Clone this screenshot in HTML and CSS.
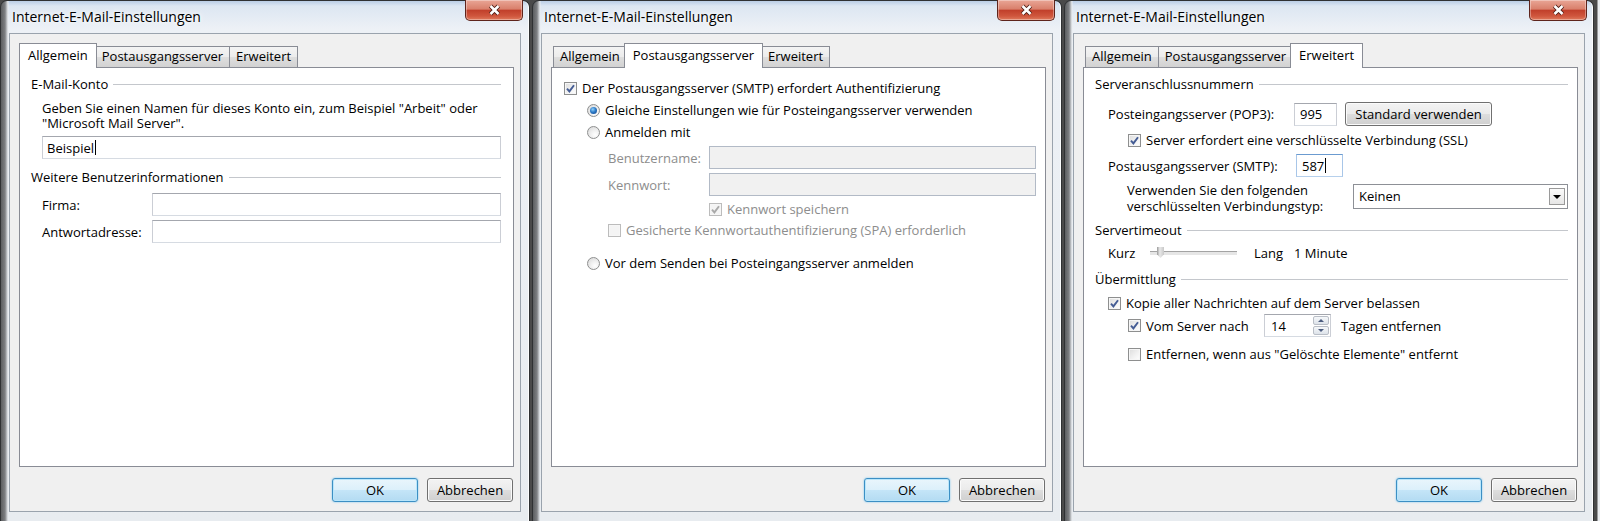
FILE: index.html
```html
<!DOCTYPE html>
<html lang="de">
<head>
    <meta charset="UTF-8" />
    <title>Internet-E-Mail-Einstellungen</title>
    <link rel="stylesheet" href="styles.css">
</head>
<body>
<div class="desktop">

<!-- ===== Dialog 1: Allgemein ===== -->
<section class="window">
    <div class="titlebar">
        <span class="title">Internet-E-Mail-Einstellungen</span>
        <span class="close">
            <svg viewBox="0 0 14 12"><path class="x-edge" d="M3 2L11 10M11 2L3 10"/><path class="x-core" d="M3 2L11 10M11 2L3 10"/></svg>
        </span>
    </div>
    <div class="client">
        <div class="tabs">
            <span class="tab active">Allgemein</span>
            <span class="tab">Postausgangsserver</span>
            <span class="tab">Erweitert</span>
        </div>
        <div class="panel general">
            <div class="group">E-Mail-Konto</div>
            <p class="hint">Geben Sie einen Namen für dieses Konto ein, zum Beispiel "Arbeit" oder<br>"Microsoft Mail Server".</p>
            <div class="textbox account">Beispiel<i class="caret"></i></div>
            <div class="group group-2">Weitere Benutzerinformationen</div>
            <div class="field first"><span class="field-label">Firma:</span><span class="textbox"></span></div>
            <div class="field"><span class="field-label">Antwortadresse:</span><span class="textbox"></span></div>
        </div>
        <div class="actions">
            <span class="btn default">OK</span>
            <span class="btn">Abbrechen</span>
        </div>
    </div>
</section>

<!-- ===== Dialog 2: Postausgangsserver ===== -->
<section class="window">
    <div class="titlebar">
        <span class="title">Internet-E-Mail-Einstellungen</span>
        <span class="close">
            <svg viewBox="0 0 14 12"><path class="x-edge" d="M3 2L11 10M11 2L3 10"/><path class="x-core" d="M3 2L11 10M11 2L3 10"/></svg>
        </span>
    </div>
    <div class="client">
        <div class="tabs">
            <span class="tab">Allgemein</span>
            <span class="tab active">Postausgangsserver</span>
            <span class="tab">Erweitert</span>
        </div>
        <div class="panel outgoing">
            <div class="opt">
                <span class="cb on"><svg viewBox="0 0 11 11"><path d="M2 5.6L4.4 8.4L9 2.2"/></svg></span>
                Der Postausgangsserver (SMTP) erfordert Authentifizierung
            </div>
            <div class="opt sub"><span class="radio on"></span>Gleiche Einstellungen wie für Posteingangsserver verwenden</div>
            <div class="opt sub"><span class="radio"></span>Anmelden mit</div>
            <div class="cred first"><span class="cred-label">Benutzername:</span><span class="textbox disabled"></span></div>
            <div class="cred"><span class="cred-label">Kennwort:</span><span class="textbox disabled"></span></div>
            <div class="opt disabled save">
                <span class="cb on"><svg viewBox="0 0 11 11"><path d="M2 5.6L4.4 8.4L9 2.2"/></svg></span>
                Kennwort speichern
            </div>
            <div class="opt disabled spa"><span class="cb"></span>Gesicherte Kennwortauthentifizierung (SPA) erforderlich</div>
            <div class="opt sub last"><span class="radio"></span>Vor dem Senden bei Posteingangsserver anmelden</div>
        </div>
        <div class="actions">
            <span class="btn default">OK</span>
            <span class="btn">Abbrechen</span>
        </div>
    </div>
</section>

<!-- ===== Dialog 3: Erweitert ===== -->
<section class="window">
    <div class="titlebar">
        <span class="title">Internet-E-Mail-Einstellungen</span>
        <span class="close">
            <svg viewBox="0 0 14 12"><path class="x-edge" d="M3 2L11 10M11 2L3 10"/><path class="x-core" d="M3 2L11 10M11 2L3 10"/></svg>
        </span>
    </div>
    <div class="client">
        <div class="tabs">
            <span class="tab">Allgemein</span>
            <span class="tab">Postausgangsserver</span>
            <span class="tab active">Erweitert</span>
        </div>
        <div class="panel advanced">
            <div class="group">Serveranschlussnummern</div>
            <div class="port-row pop">
                <span class="port-label">Posteingangsserver (POP3):</span>
                <span class="textbox port">995</span>
                <span class="btn std">Standard verwenden</span>
            </div>
            <div class="opt ssl">
                <span class="cb on"><svg viewBox="0 0 11 11"><path d="M2 5.6L4.4 8.4L9 2.2"/></svg></span>
                Server erfordert eine verschlüsselte Verbindung (SSL)
            </div>
            <div class="port-row smtp">
                <span class="port-label">Postausgangsserver (SMTP):</span>
                <span class="textbox port focus">587<i class="caret"></i></span>
            </div>
            <div class="crypt-row">
                <span class="crypt-label">Verwenden Sie den folgenden<br>verschlüsselten Verbindungstyp:</span>
                <span class="combo"><span class="combo-value">Keinen</span><span class="combo-btn"></span></span>
            </div>
            <div class="group timeout-title">Servertimeout</div>
            <div class="timeout-row">
                <span class="short">Kurz</span>
                <span class="slider"><i class="thumb"></i></span>
                <span class="long">Lang</span>
                <span>1 Minute</span>
            </div>
            <div class="group delivery-title">Übermittlung</div>
            <div class="opt keep">
                <span class="cb on"><svg viewBox="0 0 11 11"><path d="M2 5.6L4.4 8.4L9 2.2"/></svg></span>
                Kopie aller Nachrichten auf dem Server belassen
            </div>
            <div class="opt days">
                <span class="cb on"><svg viewBox="0 0 11 11"><path d="M2 5.6L4.4 8.4L9 2.2"/></svg></span>
                <span class="days-label">Vom Server nach</span>
                <span class="spin">
                    <span class="spin-value">14</span>
                    <span class="spin-arrows"><i class="up"></i><i class="down"></i></span>
                </span>
                <span class="days-after">Tagen entfernen</span>
            </div>
            <div class="opt purge"><span class="cb"></span>Entfernen, wenn aus "Gelöschte Elemente" entfernt</div>
        </div>
        <div class="actions">
            <span class="btn default">OK</span>
            <span class="btn">Abbrechen</span>
        </div>
    </div>
</section>

<div class="edge"></div>
</div>
</body>
</html>
```

FILE: styles.css
```css
/* ─────────── Base ─────────── */
* { box-sizing: border-box; }

html, body {
    margin: 0;
    height: 100%;
}
body {
    background: #4a4a4a;
    font-family: "Open Sans", "Noto Sans", sans-serif;
    font-size: 13px;
    color: #000;
    overflow: hidden;
}

.desktop {
    display: flex;
    gap: 2px;
    height: 521px;
}
.edge {
    flex: 1;
    background: linear-gradient(90deg, #4a4a4a 0, #4a4a4a 1px, #e9ecef 2px);
}

/* ─────────── Window frame (Aero) ─────────── */
.window {
    width: 530px;
    flex: none;
    height: 521px;
    display: flex;
    flex-direction: column;
    border: 1px solid #2f3133;
    border-bottom: none;
    border-radius: 7px 7px 0 0;
    padding: 0 8px 9px 8px;
    background:
        linear-gradient(90deg, #5c5e60 0, #7d7f82 4px, #e8ecf0 7px, transparent 8px),
        linear-gradient(#b9cde6 0, #dce6f2 5px, #edf1f6 28px, #e8ecf0 100%);
    box-shadow: inset -1px 0 #fbfcfd;
}

.titlebar {
    height: 32px;
    display: flex;
    justify-content: space-between;
    align-items: flex-start;
    padding-left: 3px;
}
.title {
    margin-top: 7px;
    line-height: 18px;
    font-size: 14px;
    text-shadow: 0 0 8px #fff, 0 0 4px #fff;
}
.close {
    width: 58px;
    height: 21px;
    margin: -1px -2px 0 0;
    display: flex;
    align-items: center;
    justify-content: center;
    border: 1px solid #5e241c;
    border-top: none;
    border-radius: 0 0 5px 5px;
    background: linear-gradient(#e9a696 0%, #d9806c 45%, #c1402b 52%, #cf563d 80%, #e07a5c 100%);
    box-shadow: inset 0 0 0 1px rgba(255,255,255,.35);
}
.close svg {
    width: 15px;
    height: 12px;
    fill: none;
}
.x-edge { stroke: #4a1a12; stroke-width: 4.4; }
.x-core { stroke: #fff; stroke-width: 2.6; }

/* ─────────── Client area ─────────── */
.client {
    flex: 1;
    display: flex;
    flex-direction: column;
    background: #f0f0f0;
    border: 1px solid #9aa3ad;
    padding: 9px 6px 9px 9px;
}

.tabs {
    display: flex;
    align-items: flex-end;
    height: 24px;
    padding-left: 2px;
}
.tab {
    height: 21px;
    padding: 0 6px;
    margin-right: -1px;
    line-height: 19px;
    white-space: nowrap;
    border: 1px solid #898c95;
    border-bottom: none;
    background: linear-gradient(#f4f4f4, #ececec 48%, #dedede 52%, #d2d2d2);
}
.tab.active {
    position: relative;
    z-index: 1;
    height: 25px;
    margin: 0 -2px -1px;
    padding: 2px 8px 0;
    background: #fff;
}

.panel {
    height: 400px;
    background: #fff;
    border: 1px solid #898c95;
}

.actions {
    display: flex;
    justify-content: flex-end;
    gap: 9px;
    margin-top: 11px;
    padding-right: 1px;
}

/* ─────────── Controls ─────────── */
.btn {
    width: 86px;
    height: 24px;
    display: inline-flex;
    align-items: center;
    justify-content: center;
    border: 1px solid #707070;
    border-radius: 3px;
    background: linear-gradient(#f3f3f3, #ebebeb 48%, #dddddd 52%, #cfcfcf);
    box-shadow: inset 0 0 0 1px #fbfbfb;
    white-space: nowrap;
}
.btn.default {
    border-color: #3c8fc4;
    background: linear-gradient(#e9f5fc, #dcf0fb 48%, #c4e5f8 52%, #b3dbf2);
    box-shadow: inset 0 0 0 1px #b9e6fb, 0 0 2px #6fc3ef;
}

.textbox {
    display: flex;
    align-items: center;
    height: 23px;
    padding: 0 4px;
    background: #fff;
    border: 1px solid;
    border-color: #a4a7ae #cbced5 #d6dbe2 #cbced5;
}
.textbox.disabled {
    background: #f1f1f1;
    border-color: #b2bac6;
}
.textbox.focus {
    border-color: #6b9bd0 #a8c6e8 #b6d0ec #a8c6e8;
}
.caret {
    display: inline-block;
    width: 1px;
    height: 15px;
    margin-left: 1px;
    background: #000;
}

.group {
    display: flex;
    align-items: center;
    gap: 5px;
    line-height: 16px;
    white-space: nowrap;
}
.group::after {
    content: "";
    flex: 1;
    border-top: 1px solid #c4c7cc;
}

.opt {
    display: flex;
    align-items: center;
    gap: 5px;
    height: 22px;
    white-space: nowrap;
}
.opt.disabled { color: #8d8d8d; }

.cb {
    flex: none;
    width: 13px;
    height: 13px;
    border: 1px solid #8e8f8f;
    background: linear-gradient(135deg, #dcdcdc 0%, #f1f1f1 55%, #fff 100%);
    box-shadow: inset 0 0 0 1px #f6f6f6;
}
.cb svg {
    display: block;
    width: 11px;
    height: 11px;
    fill: none;
    stroke: #445c94;
    stroke-width: 1.9;
}
.opt.disabled .cb { border-color: #bcbcbc; background: #f4f4f4; }
.opt.disabled .cb svg { stroke: #a9a9a9; }

.radio {
    flex: none;
    width: 13px;
    height: 13px;
    border-radius: 50%;
    border: 1px solid #8e8f8f;
    background: radial-gradient(circle at 65% 70%, #fff 0, #f0f0f0 40%, #d5d5d5 100%);
    display: flex;
    align-items: center;
    justify-content: center;
}
.radio.on::after {
    content: "";
    width: 7px;
    height: 7px;
    border-radius: 50%;
    background: radial-gradient(circle at 40% 35%, #8fd0fa 0, #2f7cc8 45%, #0e3f87 100%);
}

/* ─────────── Dialog 1 ─────────── */
.general { padding: 8px 12px 0 11px; }
.general .hint {
    margin: 9px 0 0 11px;
    line-height: 15px;
}
.general .account { margin: 5px 0 0 11px; }
.general .group-2 { margin-top: 10px; }
.field {
    display: flex;
    align-items: center;
    margin: 4px 0 0 11px;
}
.field.first { margin-top: 8px; }
.field-label { width: 110px; flex: none; }
.field .textbox { flex: 1; }

/* ─────────── Dialog 2 ─────────── */
.outgoing { padding: 9px 9px 0 12px; }
.outgoing .sub { margin-left: 23px; }
.outgoing .sub.last { margin-top: 11px; }
.cred {
    display: flex;
    align-items: center;
    margin: 4px 0 0 44px;
    color: #8d8d8d;
}
.cred.first { margin-top: 3px; }
.cred-label { width: 101px; flex: none; }
.cred .textbox { flex: 1; }
.outgoing .save { margin: 2px 0 0 145px; }
.outgoing .spa { margin: -1px 0 0 44px; }

/* ─────────── Dialog 3 ─────────── */
.advanced { padding: 8px 9px 0 11px; }
.port-row {
    display: flex;
    align-items: center;
    margin-left: 13px;
}
.port-row.pop { margin-top: 10px; }
.port-row.smtp { margin-top: 4px; }
.port-label { flex: none; width: 186px; }
.smtp .port-label { width: 188px; }
.textbox.port { width: 43px; padding-left: 5px; }
.smtp .textbox.port { width: 47px; }
.btn.std { width: 147px; margin-left: 8px; }

.advanced .ssl { margin: 4px 0 0 33px; height: 20px; }

.crypt-row {
    display: flex;
    align-items: center;
    margin: 5px 0 0 32px;
}
.crypt-label {
    flex: none;
    width: 226px;
    line-height: 16px;
}
.combo {
    display: flex;
    align-items: center;
    flex: 1;
    height: 25px;
    margin-top: -4px;
    padding-left: 5px;
    background: #fff;
    border: 1px solid #8d9096;
}
.combo-value { flex: 1; }
.combo-btn {
    width: 16px;
    height: 17px;
    margin-right: 2px;
    border: 1px solid #9a9a9a;
    background: linear-gradient(#fbfbfb, #e6e6e6);
    display: flex;
    align-items: center;
    justify-content: center;
}
.combo-btn::after {
    content: "";
    border: 4px solid transparent;
    border-top: 4px solid #000;
    border-bottom: none;
    margin-top: 1px;
}

.advanced .timeout-title { margin-top: 8px; }
.advanced .delivery-title { margin-top: 7px; }

.timeout-row {
    display: flex;
    align-items: center;
    height: 22px;
    margin: 4px 0 0 13px;
}
.short { width: 42px; }
.long { width: 40px; }
.slider {
    position: relative;
    width: 87px;
    height: 14px;
    margin-right: 17px;
}
.slider::before {
    content: "";
    position: absolute;
    left: 0; right: 0; top: 5px;
    height: 3px;
    border-top: 1px solid #a3a3a3;
    border-bottom: 1px solid #fff;
    background: #e6e6e6;
}
.thumb {
    position: absolute;
    left: 7px;
    top: 1px;
    width: 7px;
    height: 11px;
    background: linear-gradient(90deg, #9a9a9a, #e9e9e9 40%, #c8c8c8);
    clip-path: polygon(0 0, 100% 0, 100% 65%, 50% 100%, 0 65%);
}

.advanced .keep { margin: 6px 0 0 13px; height: 20px; }
.advanced .days { margin: 1px 0 0 33px; height: 23px; }
.days-label { width: 113px; }
.spin {
    display: flex;
    width: 67px;
    height: 23px;
    background: #fff;
    border: 1px solid;
    border-color: #a4a7ae #cbced5 #d6dbe2 #cbced5;
}
.spin-value {
    flex: 1;
    display: flex;
    align-items: center;
    padding-left: 6px;
}
.spin-arrows {
    width: 18px;
    display: flex;
    flex-direction: column;
    gap: 1px;
    padding: 1px;
}
.spin-arrows i {
    flex: 1;
    display: flex;
    align-items: center;
    justify-content: center;
    border: 1px solid #b9bec6;
    border-radius: 2px;
    background: linear-gradient(#f6f8fa, #dde3ea);
}
.spin-arrows i::after {
    content: "";
    border: 3px solid transparent;
}
.spin-arrows .up::after { border-bottom: 3px solid #4c5d7f; border-top: none; }
.spin-arrows .down::after { border-top: 3px solid #4c5d7f; border-bottom: none; }
.days-after { margin-left: 5px; }

.advanced .purge { margin: 7px 0 0 33px; height: 20px; }
```
